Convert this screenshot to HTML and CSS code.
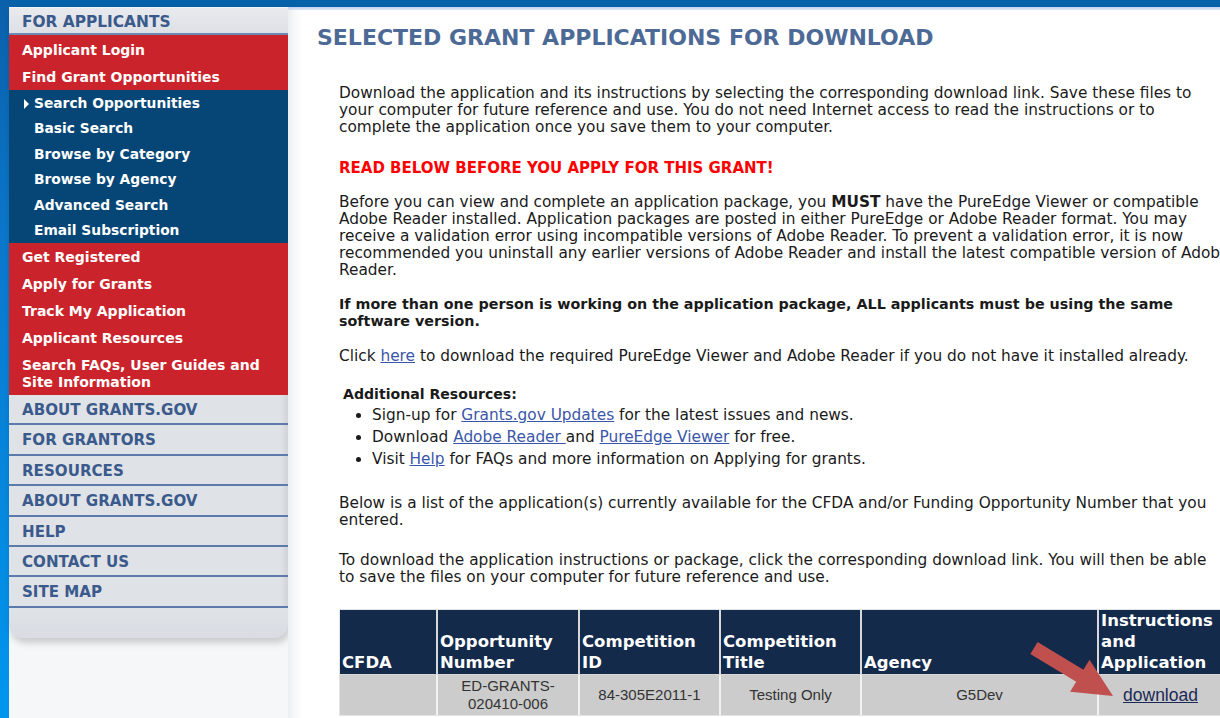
FILE: index.html
```html
<!DOCTYPE html>
<html lang="en">
<head>
<meta charset="utf-8">
<title>Selected Grant Applications for Download</title>
<link rel="stylesheet" href="styles.css">
</head>
<body>
<div class="page">
  <div class="rail"></div>
  <div class="frame">
    <div class="topbar"></div>
    <div class="columns">
      <aside class="sidebar">
        <nav class="panel">
          <div class="panel-head">FOR APPLICANTS</div>
          <ul class="nav-red first">
            <li><a href="#">Applicant Login</a></li>
            <li><a href="#">Find Grant Opportunities</a></li>
          </ul>
          <ul class="nav-sub">
            <li class="current"><a href="#">Search Opportunities</a></li>
            <li><a href="#">Basic Search</a></li>
            <li><a href="#">Browse by Category</a></li>
            <li><a href="#">Browse by Agency</a></li>
            <li><a href="#">Advanced Search</a></li>
            <li><a href="#">Email Subscription</a></li>
          </ul>
          <ul class="nav-red">
            <li><a href="#">Get Registered</a></li>
            <li><a href="#">Apply for Grants</a></li>
            <li><a href="#">Track My Application</a></li>
            <li><a href="#">Applicant Resources</a></li>
            <li><a href="#">Search FAQs, User Guides and Site Information</a></li>
          </ul>
          <ul class="nav-gray">
            <li><a href="#">ABOUT GRANTS.GOV</a></li>
            <li><a href="#">FOR GRANTORS</a></li>
            <li><a href="#">RESOURCES</a></li>
            <li><a href="#">ABOUT GRANTS.GOV</a></li>
            <li><a href="#">HELP</a></li>
            <li><a href="#">CONTACT US</a></li>
            <li><a href="#">SITE MAP</a></li>
          </ul>
          <div class="panel-foot"></div>
        </nav>
      </aside>

      <main class="content">
        <h1>SELECTED GRANT APPLICATIONS FOR DOWNLOAD</h1>
        <div class="body">
          <p class="intro">Download the application and its instructions by selecting the corresponding download link. Save these files to your computer for future reference and use. You do not need Internet access to read the instructions or to complete the application once you save them to your computer.</p>

          <p class="warn">READ BELOW BEFORE YOU APPLY FOR THIS GRANT!</p>

          <p class="req">Before you can view and complete an application package, you <b>MUST</b> have the PureEdge Viewer or compatible Adobe Reader installed. Application packages are posted in either PureEdge or Adobe Reader format. You may receive a validation error using incompatible versions of Adobe Reader. To prevent a validation error, it is now recommended you uninstall any earlier versions of Adobe Reader and install the latest compatible version of Adobe Reader.</p>

          <p class="strong">If more than one person is working on the application package, ALL applicants must be using the same software version.</p>

          <p class="click">Click <a href="#">here</a> to download the required PureEdge Viewer and Adobe Reader if you do not have it installed already.</p>

          <div class="resources">
            <div class="resources-title">Additional Resources:</div>
            <ul>
              <li>Sign-up for <a href="#">Grants.gov Updates</a> for the latest issues and news.</li>
              <li>Download <a href="#">Adobe Reader </a>and <a href="#">PureEdge Viewer</a> for free.</li>
              <li>Visit <a href="#">Help</a> for FAQs and more information on Applying for grants.</li>
            </ul>
          </div>

          <p class="list-note">Below is a list of the application(s) currently available for the CFDA and/or Funding Opportunity Number that you entered.</p>

          <p class="dl-note">To download the application instructions or package, click the corresponding download link. You will then be able to save the files on your computer for future reference and use.</p>

          <div class="table-wrap">
            <table class="apps">
              <thead>
                <tr>
                  <th class="c-cfda">CFDA</th>
                  <th class="c-opp">Opportunity Number</th>
                  <th class="c-cid">Competition ID</th>
                  <th class="c-title">Competition Title</th>
                  <th class="c-agency">Agency</th>
                  <th class="c-inst">Instructions and Application</th>
                </tr>
              </thead>
              <tbody>
                <tr>
                  <td></td>
                  <td>ED-GRANTS-<br>020410-006</td>
                  <td>84-305E2011-1</td>
                  <td>Testing Only</td>
                  <td>G5Dev</td>
                  <td><a class="dl" href="#">download</a></td>
                </tr>
              </tbody>
            </table>
            <svg class="pointer" width="100" height="64" viewBox="0 0 100 64" aria-hidden="true">
              <polygon points="5.4,14 12.6,2 58.4,29.8 64.5,19.8 88,56 45.1,51.8 51.2,41.8" fill="#c0504d"/>
            </svg>
          </div>
        </div>
      </main>
    </div>
  </div>
</div>
</body>
</html>
```

FILE: styles.css
```css
* { box-sizing: border-box; }

html, body {
  margin: 0;
  padding: 0;
  height: 100%;
  overflow: hidden;
  background: #ffffff;
}

body {
  font-family: "DejaVu Sans", Verdana, sans-serif;
  color: #1a1a1a;
}

.page {
  display: flex;
  min-height: 100%;
}

/* bright blue strip down the left edge */
.rail {
  width: 9px;
  flex: 0 0 9px;
  background: linear-gradient(to bottom, #0a60aa 0%, #0b78cc 35%, #0096ee 100%);
}

.frame {
  flex: 1;
  display: flex;
  flex-direction: column;
  min-width: 0;
}

.topbar {
  height: 10px;
  background: linear-gradient(to bottom, #0562a9 0, #0562a9 7px, #c2d2ec 7px, #dfe7f4 10px);
}

.columns {
  flex: 1;
  display: flex;
}

/* ---------- left navigation ---------- */
.sidebar {
  width: 279px;
  flex: 0 0 279px;
  background: #f5f7f9;
  margin-top: -3px;
}

.panel {
  background: #dfe2e7;
  border-radius: 0 0 14px 14px;
  box-shadow: 2px 5px 7px rgba(0, 0, 0, 0.18), inset -6px 0 6px -3px rgba(0, 0, 0, 0.08);
  overflow: hidden;
}

.panel ul {
  list-style: none;
  margin: 0;
  padding: 0;
}

.panel a {
  text-decoration: none;
  color: inherit;
}

.panel-head {
  height: 28px;
  padding: 5px 0 0 13px;
  font-weight: bold;
  font-size: 15.4px;
  line-height: 18px;
  color: #3b5a8c;
  background: linear-gradient(to bottom, #e8eaee, #dde0e5);
  border-top: 1px solid #f0f2f6;
  border-bottom: 2px solid #6d89b6;
}

.nav-red {
  background: #cb232b;
  color: #ffffff;
  font-weight: bold;
  font-size: 14px;
}

.nav-red.first {
  padding-top: 1px;
}

.nav-red li {
  padding: 6px 10px 4px 13px;
  line-height: 17px;
}

.nav-sub {
  background: #054676;
  color: #ffffff;
  font-weight: bold;
  font-size: 13.8px;
}

.nav-sub li {
  padding: 4.5px 0 4px 25px;
  line-height: 17px;
}

.nav-sub li.current::before {
  content: "";
  display: inline-block;
  width: 0;
  height: 0;
  margin-left: -10px;
  margin-right: 5px;
  border-top: 5px solid transparent;
  border-bottom: 5px solid transparent;
  border-left: 5px solid #ffffff;
  vertical-align: -1px;
}

.nav-gray {
  color: #3b5a8c;
  font-weight: bold;
  font-size: 15.1px;
}

.nav-gray li {
  height: 30.4px;
  padding: 6px 0 0 13px;
  line-height: 18px;
  border-bottom: 2px solid #5c7bab;
}

.panel-foot {
  height: 30px;
  background: linear-gradient(to bottom, #dfe2e7, #d9dce2);
}

/* ---------- page content ---------- */
.content {
  flex: 1;
  min-width: 0;
  padding-left: 29px;
  background: linear-gradient(to right, #eceef0 0, #f6f7f8 6px, #ffffff 14px);
}

.content h1 {
  margin: 16px 0 0;
  font-size: 22px;
  line-height: 24px;
  font-weight: bold;
  color: #4d6a96;
  white-space: nowrap;
}

.body {
  padding-left: 22px;
  width: 907px;
  font-size: 15.35px;
  line-height: 17px;
}

.body p {
  margin: 17px 0 0;
}

.body p.intro { margin-top: 35px; }

.body p.warn {
  margin-top: 24px;
  color: #ff0000;
  font-weight: bold;
  font-size: 15px;
}

/* the requirements paragraph runs a little past the column */
.body p.req {
  margin-right: -16px;
}

.body p.strong {
  font-weight: bold;
  font-size: 14.3px;
}

.body p.click { margin-top: 18px; }

.body a {
  color: #3a56a8;
  text-decoration: underline;
}

.resources {
  margin-top: 21px;
}

.resources-title {
  font-weight: bold;
  font-size: 14.1px;
  padding-left: 4px;
}

.resources ul {
  margin: 1px 0 0;
  padding-left: 33px;
  line-height: 22px;
}

.body p.list-note { margin-top: 25px; }

.body p.dl-note {
  margin-top: 23px;
  max-width: 870px;
}

/* ---------- applications table ---------- */
.table-wrap {
  position: relative;
  margin-top: 23px;
  width: 886px;
}

.apps {
  table-layout: fixed;
  width: 886px;
  border-collapse: separate;
  border-spacing: 0;
  background: #ffffff;
  border: 1px solid #e4e4e4;
}

.apps th {
  background: #142a4b;
  color: #ffffff;
  text-align: left;
  vertical-align: bottom;
  font-size: 16.5px;
  line-height: 21px;
  font-weight: bold;
  padding: 0 2px 1px;
  height: 65px;
  border-right: 2px solid #d8d8d8;
  border-bottom: 1px solid #d8d8d8;
}

.apps td {
  background: #cccccc;
  font-family: "Liberation Sans", Arial, sans-serif;
  font-size: 15px;
  line-height: 18px;
  color: #333333;
  text-align: center;
  height: 40px;
  padding: 1px 2px;
  border-right: 2px solid #f2f2f2;
}

.c-cfda { width: 98px; }
.c-opp { width: 142px; }
.c-cid { width: 141px; }
.c-title { width: 141px; }
.c-agency { width: 237px; }
.c-inst { width: 125px; }

.apps a.dl {
  color: #1b2a55;
  font-size: 17.5px;
  text-decoration: underline;
}

/* call-out arrow drawn over the table */
.pointer {
  position: absolute;
  left: 686px;
  top: 31px;
}
```
